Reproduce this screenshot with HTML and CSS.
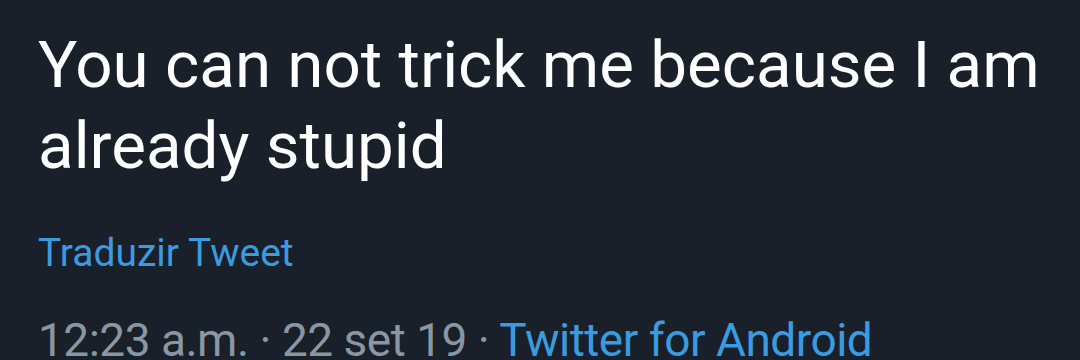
FILE: index.html
```html
<!DOCTYPE html>
<html lang="en">
<head>
  <meta charset="UTF-8">
  <title>Tweet</title>
  <link rel="stylesheet" href="styles.css">
</head>
<body>
  <article class="tweet">
    <p class="tweet-text">You can not trick me because I am already stupid</p>
    <a class="translate" href="#">Traduzir Tweet</a>
    <p class="meta">12:23 a.m. · 22 set 19 · <a class="source" href="#">Twitter for Android</a></p>
  </article>
</body>
</html>
```

FILE: styles.css
```css
*{
  padding: 0;
  margin: 0;
  box-sizing: border-box;
}
html, body{
  height: 100%;
  overflow: hidden;
}
body{
  background-color: #19202a;
  font-family: Roboto, "Noto Sans", sans-serif;
}
.tweet{
  padding: 24px 38px 0 38px;
}
.tweet-text{
  color: #ffffff;
  font-size: 65.5px;
  line-height: 81px;
  width: 1040px;
}
.translate{
  display: block;
  margin-top: 44px;
  color: #3b9be0;
  font-size: 39px;
  line-height: 46px;
  text-decoration: none;
}
.meta{
  margin-top: 36px;
  color: #8a97a3;
  font-size: 46px;
  line-height: 56px;
  letter-spacing: -0.5px;
  white-space: nowrap;
}
.source{
  color: #3b9be0;
  text-decoration: none;
}
```
